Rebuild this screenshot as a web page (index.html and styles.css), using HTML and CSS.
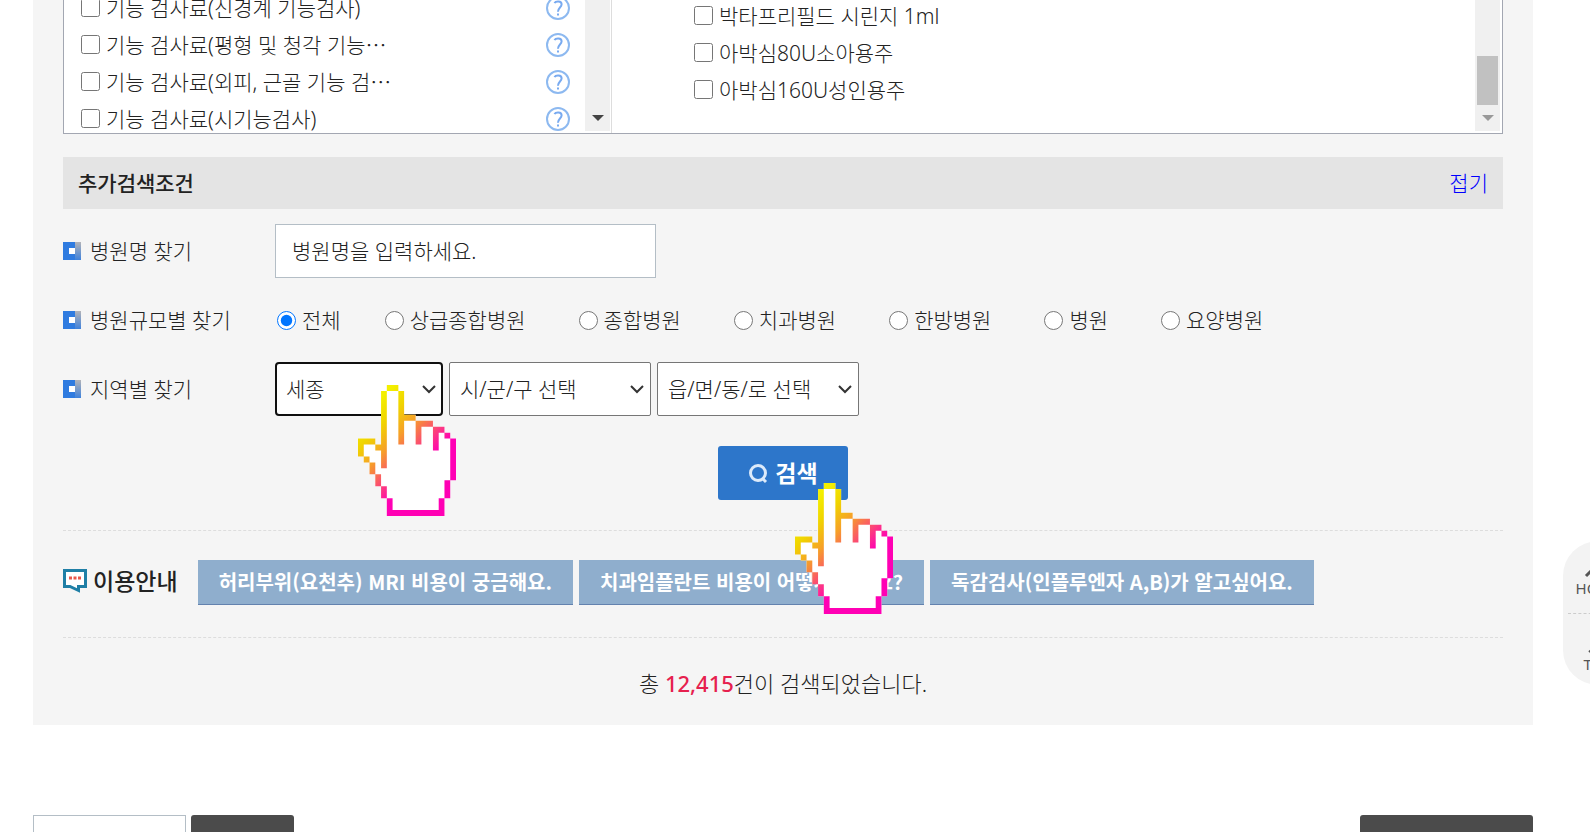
FILE: index.html
```html
<!DOCTYPE html>
<html lang="ko">
<head>
  <meta charset="UTF-8">
  <meta name="viewport" content="width=device-width, initial-scale=1.0">
  <title>비급여 진료비 검색</title>
  <link rel="stylesheet" href="styles.css">
</head>
<body>
  <!-- 공통 아이콘 -->
  <svg class="defs" width="0" height="0" aria-hidden="true">
    <defs>
      <linearGradient id="handColor" gradientUnits="userSpaceOnUse" x1="3" y1="3" x2="12.5" y2="12.5">
        <stop offset="0" stop-color="#f3f000"/>
        <stop offset="0.25" stop-color="#f0d400"/>
        <stop offset="0.5" stop-color="#f6a028"/>
        <stop offset="1" stop-color="#ff00b4"/>
      </linearGradient>
      <linearGradient id="markColor" x1="0" y1="0" x2="0" y2="1">
        <stop offset="0" stop-color="#b4b4b8"/>
        <stop offset="1" stop-color="#3f82dc"/>
      </linearGradient>
      <symbol id="hand" viewBox="0 0 17 22" preserveAspectRatio="none">
        <path fill="#fff" d="M5 0H7V1H8V5H10V6H13V7H15V8H16V9H17V16H16V19H15V22H5V19H4V17H3V15H2V13H1V12H0V9H3V10H4V1H5Z"/>
        <path fill="url(#handColor)" d="M5 0h2v1h-2zM4 1h1v13h-1zM7 1h1v9h-1zM8 5h2v1h-2zM10 6h3v1h-2v3h-1zM13 7h2v1h-1v3h-1zM15 8h1v1h-1zM16 9h1v7h-1zM15 16h1v3h-1zM14 19h1v3h-10v-3h1v2h8zM4 17h1v2h-1zM3 15h1v2h-1zM2 13h1v2h-1zM1 12h1v1h-1zM0 9h3v1h-2v2h-1zM3 10h1v1h-1z"/>
      </symbol>
      <symbol id="help" viewBox="0 0 24 24">
        <circle cx="12" cy="12" r="11" fill="#fff" stroke="#8db9f0" stroke-width="2"/>
        <path d="M8.500 7.200C9.500 4.800 15.600 4.500 15.600 8.200C15.600 11.400 12 11.800 12 15.800" fill="none" stroke="#78aaf0" stroke-width="2"/>
        <rect x="11" y="17.500" width="2" height="2" fill="#78aaf0"/>
      </symbol>
      <symbol id="mark" viewBox="0 0 18 18">
        <rect width="18" height="18" fill="#2f7be0"/>
        <rect x="12" width="6" height="18" fill="url(#markColor)"/>
        <rect x="6" y="6" width="6" height="6" fill="#fff"/>
      </symbol>
      <symbol id="chevron" viewBox="0 0 14 9">
        <path d="M1 1L7 7L13 1" fill="none" stroke="#333" stroke-width="2"/>
      </symbol>
      <symbol id="arrow" viewBox="0 0 12 6">
        <path d="M0 0H12L6 6Z" fill="currentColor"/>
      </symbol>
    </defs>
  </svg>

  <main class="container">
    <section class="search">
      <!-- 항목 선택 목록 -->
      <div class="lists">
        <div class="list list-left">
          <ul class="items">
            <li><label><input type="checkbox"> 기능 검사료(신경계 기능검사)</label><svg class="help"><use href="#help"/></svg></li>
            <li><label><input type="checkbox"> 기능 검사료(평형 및 청각 기능⋯</label><svg class="help"><use href="#help"/></svg></li>
            <li><label><input type="checkbox"> 기능 검사료(외피, 근골 기능 검⋯</label><svg class="help"><use href="#help"/></svg></li>
            <li><label><input type="checkbox"> 기능 검사료(시기능검사)</label><svg class="help"><use href="#help"/></svg></li>
          </ul>
          <div class="scroll">
            <svg class="arrow"><use href="#arrow"/></svg>
          </div>
        </div>
        <div class="list list-right">
          <ul class="items">
            <li><label><input type="checkbox"> 박타프리필드 시린지 1ml</label></li>
            <li><label><input type="checkbox"> 아박심80U소아용주</label></li>
            <li><label><input type="checkbox"> 아박심160U성인용주</label></li>
          </ul>
          <div class="scroll scroll-end">
            <div class="thumb"></div>
            <svg class="arrow"><use href="#arrow"/></svg>
          </div>
        </div>
      </div>

      <div class="bar">
        <h2>추가검색조건</h2>
        <a href="#">접기</a>
      </div>

      <!-- 추가 검색 조건 -->
      <form class="conditions">
        <div class="row">
          <label class="row-title" for="hospitalName"><svg class="mark"><use href="#mark"/></svg>병원명 찾기</label>
          <input type="text" id="hospitalName" class="name-input" placeholder="병원명을 입력하세요.">
        </div>
        <div class="row">
          <span class="row-title"><svg class="mark"><use href="#mark"/></svg>병원규모별 찾기</span>
          <div class="radios">
            <label><input type="radio" name="size" checked>전체</label>
            <label><input type="radio" name="size">상급종합병원</label>
            <label><input type="radio" name="size">종합병원</label>
            <label><input type="radio" name="size">치과병원</label>
            <label><input type="radio" name="size">한방병원</label>
            <label><input type="radio" name="size">병원</label>
            <label><input type="radio" name="size">요양병원</label>
          </div>
        </div>
        <div class="row">
          <label class="row-title" for="sido"><svg class="mark"><use href="#mark"/></svg>지역별 찾기</label>
          <div class="regions">
            <div class="select select-sido">
              <select id="sido"><option>세종</option></select>
              <svg class="chevron"><use href="#chevron"/></svg>
              <svg class="hand hand-select"><use href="#hand"/></svg>
            </div>
            <div class="select">
              <select aria-label="시/군/구"><option>시/군/구 선택</option></select>
              <svg class="chevron"><use href="#chevron"/></svg>
            </div>
            <div class="select">
              <select aria-label="읍/면/동/로"><option>읍/면/동/로 선택</option></select>
              <svg class="chevron"><use href="#chevron"/></svg>
            </div>
          </div>
        </div>
        <div class="submit">
          <button type="button" class="btn-search">
            <svg width="20" height="22" viewBox="0 0 20 22"><circle cx="10" cy="11" r="7.500" fill="none" stroke="#dceafa" stroke-width="3"/><path d="M14 16L18 20" stroke="#dceafa" stroke-width="3"/></svg>검색
          </button>
          <svg class="hand hand-search"><use href="#hand"/></svg>
        </div>
      </form>

      <!-- 이용안내 -->
      <div class="guide">
        <h3>
          <svg width="24" height="24" viewBox="0 0 24 24"><path d="M1.500 1.500H22.500V17.500H15.500V21.500L7 17.500H1.500Z" fill="#fff" stroke="#1f7fa6" stroke-width="3"/><path d="M6 7.500h3v3h-3zM10.500 7.500h3v3h-3zM15 7.500h3v3h-3z" fill="#e8584c"/></svg>이용안내
        </h3>
        <button type="button">허리부위(요천추) MRI 비용이 궁금해요.</button>
        <button type="button">치과임플란트 비용이 어떻게 되나요?</button>
        <button type="button">독감검사(인플루엔자 A,B)가 알고싶어요.</button>
      </div>

      <p class="count">총 <strong>12,415</strong>건이 검색되었습니다.</p>
    </section>

    <div class="tools">
      <input type="text" class="tool-input" aria-label="목록 개수">
      <button type="button" class="tool-small" aria-label="적용"></button>
      <button type="button" class="tool-wide" aria-label="다운로드"></button>
    </div>
  </main>

  <!-- 오른쪽 퀵메뉴 -->
  <nav class="quick">
    <a href="#"><svg width="28" height="16" viewBox="0 0 28 16"><path d="M2 14L14 2L26 14" fill="none" stroke="#555" stroke-width="3"/></svg>HOME</a>
    <a href="#"><svg width="22" height="12" viewBox="0 0 22 12"><path d="M2 10L11 2L20 10" fill="none" stroke="#555" stroke-width="2"/></svg>TOP</a>
  </nav>
</body>
</html>
```

FILE: styles.css
```css
* {
  margin: 0;
  padding: 0;
  box-sizing: border-box;
}

body {
  font-family: "Noto Sans", "Noto Sans CJK KR", sans-serif;
  font-size: 21px;
  font-weight: 300;
  line-height: 30px;
  color: #222;
  background: #fff;
  height: 100vh;
  overflow: hidden;
}

input, select, button {
  font: inherit;
  color: inherit;
}

.defs {
  position: absolute;
}

.container {
  margin: 0 57px 0 33px;
}

.search {
  padding: 0 30px 27px;
  background: #f5f5f5;
}

/* 항목 목록 */
.lists {
  display: flex;
  height: 134px;
  background: #fff;
  border: 1px solid #a3a7b2;
  border-top: 0;
}

.list {
  display: flex;
  padding-bottom: 2px;
  overflow: hidden;
}

.list-left {
  width: 548px;
  padding-right: 1px;
  border-right: 1px solid #ddd;
}

.list-right {
  flex: 1;
  padding-right: 2px;
}

.items {
  flex: 1;
  list-style: none;
  margin-top: -11px;
  padding: 0 15px 0 17px;
}

.list-right .items {
  margin-top: -3px;
  padding-left: 82px;
}

.items li {
  display: flex;
  align-items: center;
  justify-content: space-between;
  height: 37px;
}

.items label,
.radios label {
  display: flex;
  align-items: center;
  gap: 6px;
}

input[type="checkbox"],
input[type="radio"] {
  width: 19px;
  height: 19px;
}

.help {
  width: 24px;
  height: 24px;
}

.scroll {
  display: flex;
  flex-direction: column;
  align-items: center;
  justify-content: flex-end;
  gap: 10px;
  width: 25px;
  padding-bottom: 10px;
  background: #f0f0f0;
  color: #444;
}

.scroll-end {
  color: #999;
}

.thumb {
  width: 21px;
  height: 49px;
  background: #c1c1c1;
}

.arrow {
  width: 12px;
  height: 6px;
}

.bar {
  display: flex;
  align-items: center;
  justify-content: space-between;
  height: 52px;
  margin-top: 23px;
  padding: 0 15px;
  background: #e4e4e4;
}

.bar h2 {
  font-size: 21px;
  font-weight: 500;
}

.bar a {
  color: #00f;
  text-decoration: none;
}

/* 검색 조건 */
.conditions {
  display: flex;
  flex-direction: column;
  gap: 15px;
  padding: 15px 0 30px;
  border-bottom: 1px dashed #ddd;
}

.row {
  display: flex;
  align-items: center;
  height: 54px;
}

.row-title {
  display: flex;
  align-items: center;
  gap: 9px;
  width: 212px;
}

.mark {
  width: 18px;
  height: 18px;
}

.name-input {
  width: 381px;
  height: 54px;
  padding: 0 16px;
  background: #fff;
  border: 1px solid #b4bec6;
}

.name-input::placeholder {
  color: #222;
}

.radios {
  display: flex;
  gap: 53px;
  padding-left: 2px;
}

.radios label:first-child {
  margin-right: -9px;
}

.regions {
  display: flex;
  gap: 6px;
}

.select {
  position: relative;
  width: 202px;
}

.select select {
  width: 100%;
  height: 54px;
  padding: 0 10px;
  appearance: none;
  background: #fff;
  border: 1px solid #767676;
  border-radius: 2px;
}

.select-sido {
  width: 168px;
}

.select-sido select {
  padding: 0 9px;
  border: 2px solid #101010;
  border-radius: 4px;
}

.chevron {
  position: absolute;
  top: 23px;
  right: 7px;
  width: 14px;
  height: 9px;
  pointer-events: none;
}

.submit {
  position: relative;
  align-self: center;
  margin-top: 15px;
}

.btn-search {
  display: flex;
  align-items: center;
  justify-content: center;
  gap: 7px;
  width: 130px;
  height: 54px;
  font-size: 23px;
  font-weight: 700;
  color: #fff;
  background: #2d76ca;
  border: 0;
  border-radius: 3px;
}

/* 손가락 포인터 */
.hand {
  position: absolute;
  z-index: 2;
  width: 98px;
  height: 131px;
  pointer-events: none;
}

.hand-select {
  top: 23px;
  left: 83px;
}

.hand-search {
  top: 37px;
  left: 77px;
}

/* 이용안내 */
.guide {
  display: flex;
  align-items: center;
  gap: 6px;
  padding: 29px 0 32px;
  border-bottom: 1px dashed #ddd;
}

.guide h3 {
  display: flex;
  align-items: center;
  gap: 6px;
  margin-right: 14px;
  padding-bottom: 4px;
  font-size: 23px;
  font-weight: 500;
}

.guide button {
  height: 45px;
  padding: 0 21px;
  font-family: "Noto Sans CJK KR", sans-serif;
  font-size: 20px;
  font-weight: 700;
  color: #fff;
  background: #8faecd;
  border: 0;
  border-bottom: 1px solid #6382ae;
}

.count {
  padding-top: 30px;
  font-size: 22px;
  text-align: center;
}

.count strong {
  font-weight: 500;
  color: #e6204e;
}

/* 하단 버튼 */
.tools {
  display: flex;
  gap: 5px;
  margin-top: 90px;
}

.tool-input {
  width: 153px;
  height: 54px;
  border: 1px solid #b4bec6;
}

.tool-small,
.tool-wide {
  width: 103px;
  height: 54px;
  background: #4b4b4b;
  border: 0;
  border-radius: 3px;
}

.tool-wide {
  width: 173px;
  margin-left: auto;
}

/* 퀵메뉴 */
.quick {
  position: fixed;
  top: 541px;
  right: -43px;
  width: 70px;
  padding: 0 5px;
  background: #f3f3f3;
  border-radius: 35px;
}

.quick a {
  display: flex;
  flex-direction: column;
  align-items: center;
  justify-content: center;
  height: 72px;
  padding-top: 6px;
  font-size: 15px;
  font-weight: 400;
  line-height: 20px;
  color: #555;
  text-decoration: none;
}

.quick a + a {
  padding-top: 16px;
  border-top: 1px dashed #ccc;
}
```
